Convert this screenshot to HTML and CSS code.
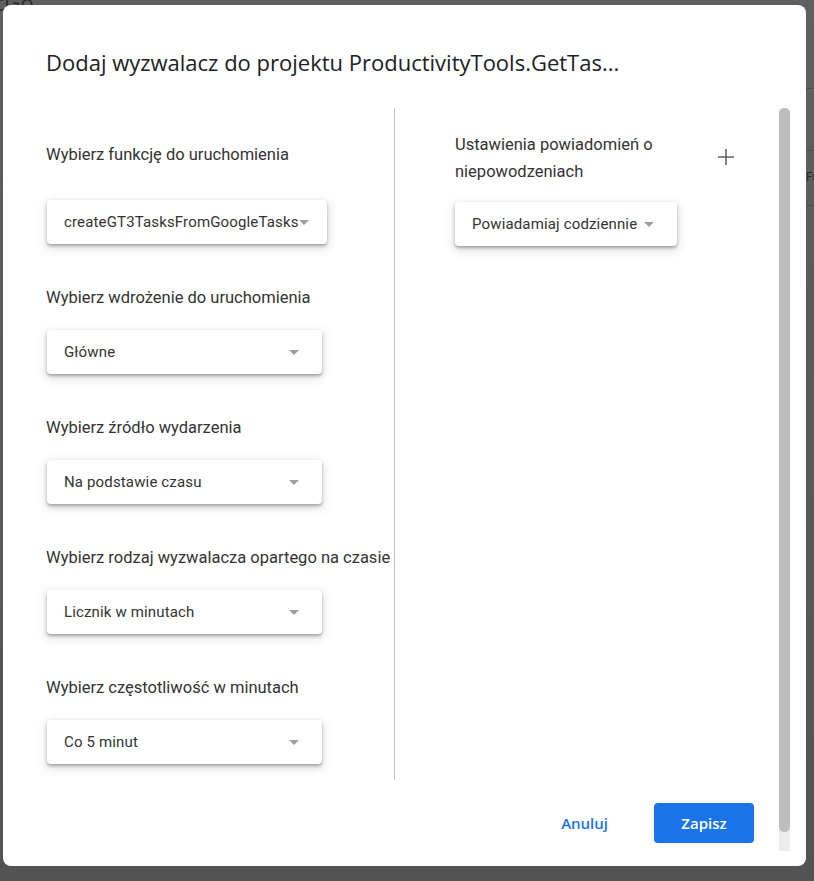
FILE: index.html
```html
<!DOCTYPE html>
<html lang="pl">
<head>
<meta charset="utf-8">
<title>Dodaj wyzwalacz</title>
<link rel="stylesheet" href="styles.css">
</head>
<body>
<div class="backdrop">
  <div class="bg-text">cGo...</div>
  <div class="bg-line l1"></div>
  <div class="bg-line l2"></div>
  <div class="bg-line l3"></div>
  <div class="bg-fu">Fu</div>
</div>
<div class="dialog">
  <h1 class="title">Dodaj wyzwalacz do projektu ProductivityTools.GetTas...</h1>
  <div class="body">
    <div class="content">
      <div class="columns">
        <div class="col-left">
          <div class="field first">
            <div class="label">Wybierz funkcję do uruchomienia</div>
            <div class="select wide"><span>createGT3TasksFromGoogleTasks</span><i class="arrow"></i></div>
          </div>
          <div class="field">
            <div class="label">Wybierz wdrożenie do uruchomienia</div>
            <div class="select"><span>Główne</span><i class="arrow"></i></div>
          </div>
          <div class="field">
            <div class="label">Wybierz źródło wydarzenia</div>
            <div class="select"><span>Na podstawie czasu</span><i class="arrow"></i></div>
          </div>
          <div class="field">
            <div class="label nowrap">Wybierz rodzaj wyzwalacza opartego na czasie</div>
            <div class="select"><span>Licznik w minutach</span><i class="arrow"></i></div>
          </div>
          <div class="field">
            <div class="label">Wybierz częstotliwość w minutach</div>
            <div class="select"><span>Co 5 minut</span><i class="arrow"></i></div>
          </div>
        </div>
        <div class="divider"></div>
        <div class="col-right">
          <div class="right-head">
            <div class="label two-line">Ustawienia powiadomień o niepowodzeniach</div>
            <button class="plus" aria-label="Dodaj">
              <svg width="18" height="18" viewBox="0 0 18 18"><path d="M9 1v16M1 9h16" stroke="#5f6368" stroke-width="1.6" fill="none"/></svg>
            </button>
          </div>
          <div class="select notify"><span>Powiadamiaj codziennie</span><i class="arrow"></i></div>
        </div>
      </div>
      <div class="actions">
        <button class="btn-text">Anuluj</button>
        <button class="btn-primary">Zapisz</button>
      </div>
    </div>
    <div class="scrollbar"><div class="thumb"></div></div>
  </div>
</div>
</body>
</html>
```
FILE: styles.css
```css
* { box-sizing: border-box; }
html, body { margin: 0; padding: 0; }
body {
  width: 814px;
  height: 881px;
  background: #5a5a5a;
  font-family: Roboto, "Noto Sans", sans-serif;
  overflow: hidden;
  position: relative;
}
.backdrop { position: absolute; inset: 0; background: linear-gradient(#606060, #535353); }
.bg-text {
  position: absolute; left: -6px; top: -13px;
  font-family: "Open Sans", sans-serif; font-size: 22px; color: #2b2b2b;
}
.bg-line { position: absolute; height: 1px; background: #4f4f4f; }
.l1 { left: 806px; right: 0; top: 88px; }
.l2 { left: 806px; right: 0; top: 150px; }
.l3 { left: 806px; right: 0; top: 205px; }
.bg-fu { position: absolute; left: 806px; top: 170px; font-size: 12px; color: #2a2a3a; }

.dialog {
  position: absolute;
  left: 3px; top: 5px;
  width: 803px; height: 861px;
  background: #fff;
  border-radius: 8px;
  display: flex;
  flex-direction: column;
}
.title {
  margin: 0;
  padding: 43px 0 0 43px;
  font-family: "Open Sans", sans-serif;
  font-weight: 500;
  font-size: 22px;
  line-height: 28px;
  color: #202124;
  white-space: nowrap;
}
.body {
  margin-top: 32px;
  height: 743px;
  display: flex;
}
.content { flex: 1; display: flex; flex-direction: column; }
.columns { display: flex; height: 672px; }
.col-left { width: 391px; padding-left: 43px; }
.divider { width: 1px; background: #c6c6c6; }
.col-right { flex: 1; padding-left: 60px; padding-right: 41px; }

.label {
  font-size: 16.5px;
  line-height: 24px;
  color: #333;
}
.nowrap { white-space: nowrap; }
.field { margin-top: 42px; }
.field.first { margin-top: 35px; }
.field.first .select { margin-top: 33px; }
.select {
  position: relative;
  margin-top: 20px;
  margin-left: 1px;
  width: 275px;
  height: 44px;
  border-radius: 4px;
  background: #fff;
  box-shadow: 0 2px 3px rgba(40,44,50,.35), 0 3px 8px 2px rgba(60,64,67,.15);
  display: flex;
  align-items: center;
  padding-left: 17px;
  font-size: 15px;
  color: #333;
  letter-spacing: 0.15px;
  white-space: nowrap;
}
.select.wide { width: 280px; }
.arrow {
  position: absolute;
  right: 23px; top: 20px;
  width: 0; height: 0;
  border-left: 5px solid transparent;
  border-right: 5px solid transparent;
  border-top: 5px solid #9e9e9e;
}
.wide .arrow { right: 18px; }

.right-head {
  margin-top: 23px;
  display: flex;
  justify-content: space-between;
  align-items: flex-start;
}
.two-line { width: 230px; line-height: 27px; }
.plus {
  margin-top: 14px;
  width: 24px; height: 24px;
  border: 0; background: none; padding: 0;
  display: flex; align-items: center; justify-content: center;
}
.select.notify { width: 222px; margin-left: 0; margin-top: 17px; }

.actions {
  display: flex;
  justify-content: flex-end;
  align-items: center;
  padding-top: 23px;
  padding-right: 25px;
  gap: 30px;
}
.btn-text, .btn-primary {
  font-family: "Open Sans", sans-serif;
  font-weight: 600;
  font-size: 15px;
  border: 0;
  height: 40px;
  border-radius: 4px;
  cursor: pointer;
}
.btn-text { background: none; color: #1a73e8; padding: 0 16px; }
.btn-primary { background: #1a73e8; color: #fff; width: 100px; }

.scrollbar {
  width: 11px;
  margin-right: 16px;
  height: 743px;
  background: #ececec;
  border-radius: 5px 5px 0 0;
}
.thumb {
  height: 724px;
  background: #bdbdbd;
  border-radius: 5px;
}
```
